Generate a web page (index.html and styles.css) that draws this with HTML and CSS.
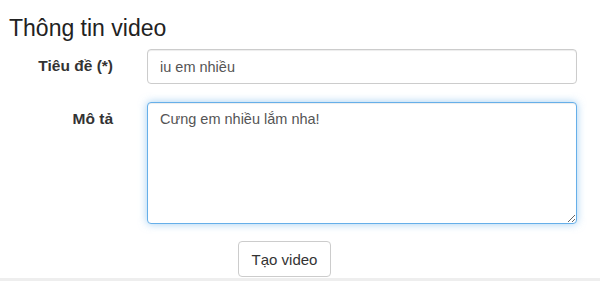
FILE: index.html
```html
<!doctype html>
<html>
<head>
  <meta charset="utf-8">
  <title>Tạo video</title>
  <link rel="stylesheet" href="styles.css">
</head>
<body>
  <h1 class="title">Thông tin video</h1>
  <form class="video-form">
    <label class="field-label" for="tieude">Tiêu đề (*)</label>
    <input class="field-input" type="text" id="tieude" name="tieude" value="iu em nhiều">

    <label class="field-label" for="mota">Mô tả</label>
    <textarea class="field-input field-area is-focused" id="mota" name="mota">Cưng em nhiều lắm nha!</textarea>

    <button class="btn-create" type="button">Tạo video</button>
  </form>
  <div class="page-footer"></div>
</body>
</html>
```

FILE: styles.css
```css
body{
    margin: 0;
    background-color: #fff;
    font-family: "Liberation Sans", Arial, Helvetica, sans-serif;
    color: #333;
}
.title{
    margin: 16px 0 0 9px;
    font-size: 23px;
    font-weight: normal;
    line-height: 1.1;
    color: #222;
}
.video-form{
    display: grid;
    grid-template-columns: 147px 430px;
    row-gap: 18px;
    margin-top: 8px;
}
.field-label{
    text-align: right;
    padding: 7px 34px 0 0;
    font-size: 15.5px;
    font-weight: bold;
    line-height: 20px;
}
.field-input{
    box-sizing: border-box;
    width: 430px;
    height: 35px;
    margin: 0;
    padding: 6px 12px;
    font-family: inherit;
    font-size: 14.5px;
    line-height: 20px;
    color: #555;
    background: #fff;
    border: 1px solid #ccc;
    border-radius: 4px;
    box-shadow: inset 0 1px 1px rgba(0,0,0,.075);
}
.field-area{
    height: 122px;
    resize: vertical;
}
.is-focused{
    border-color: #66afe9;
    outline: 0;
    box-shadow: inset 0 1px 1px rgba(0,0,0,.075), 0 0 8px rgba(102,175,233,.6);
}
.btn-create{
    grid-column: 2;
    justify-self: start;
    margin: -1px 0 0 91px;
    width: 93px;
    height: 36px;
    padding: 0;
    font-family: inherit;
    font-size: 15px;
    color: #333;
    background: #fff;
    border: 1px solid #ccc;
    border-radius: 4px;
}
.page-footer{
    margin-top: 1px;
    height: 10px;
    background-color: #eee;
}
```
